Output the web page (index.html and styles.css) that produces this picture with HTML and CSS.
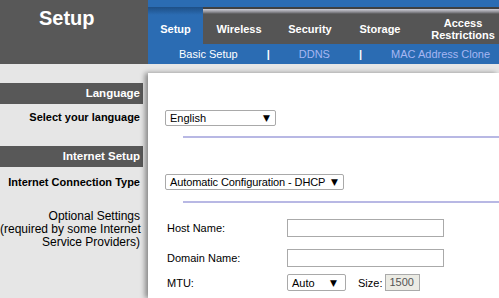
FILE: index.html
```html
<!DOCTYPE html>
<html lang="en">
<head>
  <meta charset="UTF-8">
  <title>Setup</title>
  <link rel="stylesheet" href="styles.css">
</head>
<body>

<div class="header">
  <div class="brand">Setup</div>
  <div class="nav">
    <div class="top-strip"></div>
    <div class="tabs">
      <div class="tab active">Setup</div>
      <div class="tab w72">Wireless</div>
      <div class="tab w70">Security</div>
      <div class="tab w70">Storage</div>
      <div class="tab last">Access<br>Restrictions</div>
    </div>
    <div class="subnav">
      <span class="current">Basic Setup</span>
      <span class="sep">|</span>
      <span class="link">DDNS</span>
      <span class="sep">|</span>
      <span class="link">MAC Address Clone</span>
    </div>
  </div>
</div>

<div class="main">
  <div class="side">
    <div class="sec-head first">Language</div>
    <div class="side-row lang">Select your language</div>
    <div class="sec-head">Internet Setup</div>
    <div class="side-row conn">Internet Connection Type</div>
    <div class="side-note">Optional Settings<br>(required by some Internet<br>Service Providers)</div>
  </div>

  <div class="content">
    <div class="select lang-select"><span>English</span><span class="arrow">▼</span></div>
    <div class="rule r1"></div>
    <div class="select dhcp-select"><span class="tight">Automatic Configuration - DHCP</span><span class="arrow">▼</span></div>
    <div class="rule r2"></div>

    <div class="form-row host">
      <label>Host Name:</label>
      <div class="field"></div>
    </div>
    <div class="form-row domain">
      <label>Domain Name:</label>
      <div class="field"></div>
    </div>
    <div class="form-row mtu">
      <label>MTU:</label>
      <div class="select auto-select"><span>Auto</span><span class="arrow">▼</span></div>
      <span class="size-label">Size:</span>
      <div class="field size">1500</div>
    </div>
  </div>
</div>

</body>
</html>
```

FILE: styles.css
```css
body {
  margin: 0;
  background: #e6e6e6;
  font-family: "Liberation Sans", Arial, sans-serif;
  font-size: 11px;
  color: #000;
  overflow: hidden;
}

/* header */

.header {
  display: flex;
  height: 64px;
  overflow: hidden;
}

.brand {
  width: 148px;
  flex: none;
  box-sizing: border-box;
  background: #585858;
  color: #fff;
  font-size: 20px;
  font-weight: bold;
  line-height: 23px;
  padding: 7px 0 0 39px;
}

.nav {
  flex: 1;
  display: flex;
  flex-direction: column;
  overflow: hidden;
}

.top-strip {
  height: 7px;
  background: #2b6cb3;
}

.tabs {
  display: flex;
  height: 37px;
  background: linear-gradient(to bottom, #404040 0, #404040 2px, #cfcfd8 2px, #8e8e95 5px, #555 7px, #555 100%);
}

.tab {
  flex: none;
  width: 55px;
  box-sizing: border-box;
  padding-top: 7px;
  display: flex;
  align-items: center;
  justify-content: center;
  text-align: center;
  color: #fff;
  font-weight: bold;
  line-height: 12px;
}

.tab.active {
  background: linear-gradient(to bottom, #1e4f86 0, #2b6cb3 8px);
}

.tab.w72 { width: 72px; }
.tab.w70 { width: 70px; }
.tab.last { width: 96px; }

.subnav {
  height: 20px;
  line-height: 20px;
  background: #2b6cb3;
  display: flex;
  gap: 29px;
  padding-left: 31px;
  white-space: nowrap;
}

.subnav .current { color: #fff; }
.subnav .sep { color: #fff; font-weight: bold; }
.subnav .link { color: #a6b6f2; }

/* body */

.main {
  display: flex;
  padding-top: 9px;
  height: 225px;
}

.side {
  width: 148px;
  flex: none;
  white-space: nowrap;
}

.sec-head {
  height: 21px;
  line-height: 21px;
  margin: 16px 5px 0 0;
  background: #585858;
  color: #fff;
  font-weight: bold;
  font-size: 11.5px;
  text-align: right;
  padding-right: 3px;
}

.sec-head.first { margin-top: 10px; }

.side-row {
  text-align: right;
  padding-right: 8px;
  font-weight: bold;
}

.side-row.lang { line-height: 26px; }
.side-row.conn { line-height: 30px; }

.side-note {
  margin-top: 13px;
  text-align: right;
  padding-right: 8px;
  font-size: 12px;
  line-height: 13px;
}

.content {
  flex: 1;
  background: #fff;
  padding-left: 17px;
  box-shadow: -3px 0 5px rgba(0, 0, 0, 0.4);
}

.select {
  box-sizing: border-box;
  height: 16px;
  border: 1px solid #a9a9a9;
  border-radius: 2px;
  display: flex;
  align-items: center;
  justify-content: space-between;
  padding: 0 5px 0 4px;
  background: #fff;
  white-space: nowrap;
}

.arrow {
  font-size: 9px;
  font-family: "DejaVu Sans", sans-serif;
}

.tight {
  letter-spacing: -0.1px;
}

.lang-select {
  width: 111px;
  margin-top: 37px;
}

.dhcp-select {
  width: 179px;
  margin-top: 36px;
}

.rule {
  height: 2px;
  background: #b8b8e4;
  margin-left: 18px;
}

.rule.r1 { margin-top: 10px; }
.rule.r2 { margin-top: 11px; }

.form-row {
  display: flex;
  align-items: center;
  padding-left: 2px;
}

.form-row label {
  width: 120px;
  flex: none;
}

.form-row.host { margin-top: 16px; }
.form-row.domain { margin-top: 12px; }
.form-row.mtu { margin-top: 7px; }

.field {
  box-sizing: border-box;
  width: 157px;
  height: 18px;
  border: 1px solid #aaa;
  background: #fff;
}

.auto-select {
  width: 59px;
  height: 17px;
  padding-right: 8px;
}

.size-label {
  margin-left: 12px;
}

.field.size {
  width: 35px;
  height: 17px;
  margin-left: 3px;
  background: #ebebe4;
  color: #555;
  line-height: 15px;
  padding-left: 3px;
}
```
